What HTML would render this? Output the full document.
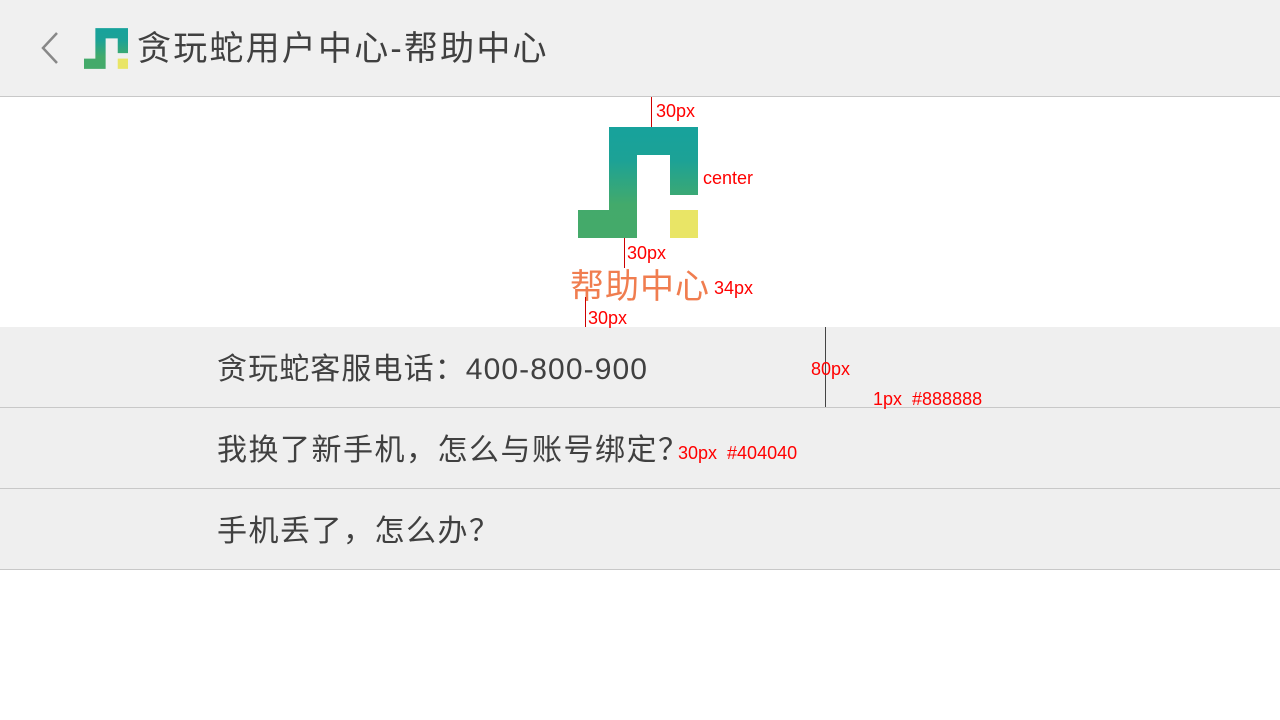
<!DOCTYPE html>
<html><head><meta charset="utf-8"><style>
*{margin:0;padding:0;box-sizing:border-box}
body{width:1280px;height:720px;background:#fff;position:relative;overflow:hidden;font-family:"Liberation Sans","Noto Sans CJK SC",sans-serif}
.a{position:absolute;white-space:nowrap}
.hdr{position:absolute;left:0;top:0;width:1280px;height:97px;background:#f0f0f0;border-bottom:1px solid #c8c8c8}
.row{position:absolute;left:0;width:1280px;height:81px;background:#efefef;border-bottom:1px solid #c8c8c8}
.row span{position:absolute;left:217px;top:23px;font-size:30px;color:#404040;line-height:40px;letter-spacing:1.5px}
.r{color:#f00;font-size:18px;line-height:20px}
.vl{position:absolute;width:1px;background:#c00}
</style></head><body>
<div class="hdr"></div>
<svg class="a" style="left:36px;top:30px" width="26" height="36"><path d="M21 3 L7 18 L21 33" fill="none" stroke="#888" stroke-width="2.5"/></svg>
<svg class="a" style="left:84px;top:28px" width="44" height="41" viewBox="0 0 120 111">
<defs><linearGradient id="g" x1="0" y1="0" x2="0" y2="1"><stop offset="0" stop-color="#17a29c"/><stop offset="0.3" stop-color="#1ca296"/><stop offset="0.7" stop-color="#43aa6b"/><stop offset="1" stop-color="#45aa6a"/></linearGradient></defs>
<path d="M31 0H120V68H92V28H59V111H0V83H31Z" fill="url(#g)"/><rect x="92" y="83" width="28" height="28" fill="#e9e566"/></svg>
<div class="a" style="left:137px;top:28px;font-size:34px;color:#404040;line-height:42px;letter-spacing:2.2px">贪玩蛇用户中心-帮助中心</div>

<svg class="a" style="left:578px;top:127px" width="120" height="111" viewBox="0 0 120 111">
<defs><linearGradient id="g2" x1="0" y1="0" x2="0" y2="1"><stop offset="0" stop-color="#17a29c"/><stop offset="0.3" stop-color="#1ca296"/><stop offset="0.7" stop-color="#43aa6b"/><stop offset="1" stop-color="#45aa6a"/></linearGradient></defs>
<path d="M31 0H120V68H92V28H59V111H0V83H31Z" fill="url(#g2)"/><rect x="92" y="83" width="28" height="28" fill="#e9e566"/></svg>
<div class="a" style="left:570px;top:267px;font-size:34px;color:#f07d4f;line-height:40px;letter-spacing:1px">帮助中心</div>

<div class="row" style="top:327px"><span style="letter-spacing:1.1px">贪玩蛇客服电话：400-800-900</span></div>
<div class="row" style="top:408px"><span>我换了新手机，怎么与账号绑定？</span></div>
<div class="row" style="top:489px"><span>手机丢了，怎么办？</span></div>

<div class="vl" style="left:651px;top:97px;height:30px"></div>
<div class="a r" style="left:656px;top:101px">30px</div>
<div class="a r" style="left:703px;top:168px">center</div>
<div class="vl" style="left:624px;top:238px;height:30px"></div>
<div class="a r" style="left:627px;top:243px">30px</div>
<div class="a r" style="left:714px;top:278px">34px</div>
<div class="vl" style="left:585px;top:297px;height:30px"></div>
<div class="a r" style="left:588px;top:308px">30px</div>
<div class="vl" style="left:825px;top:327px;height:80px;background:#444"></div>
<div class="a r" style="left:811px;top:359px">80px</div>
<div class="a r" style="left:873px;top:389px">1px &nbsp;#888888</div>
<div class="a r" style="left:678px;top:443px">30px &nbsp;#404040</div>
</body></html>
